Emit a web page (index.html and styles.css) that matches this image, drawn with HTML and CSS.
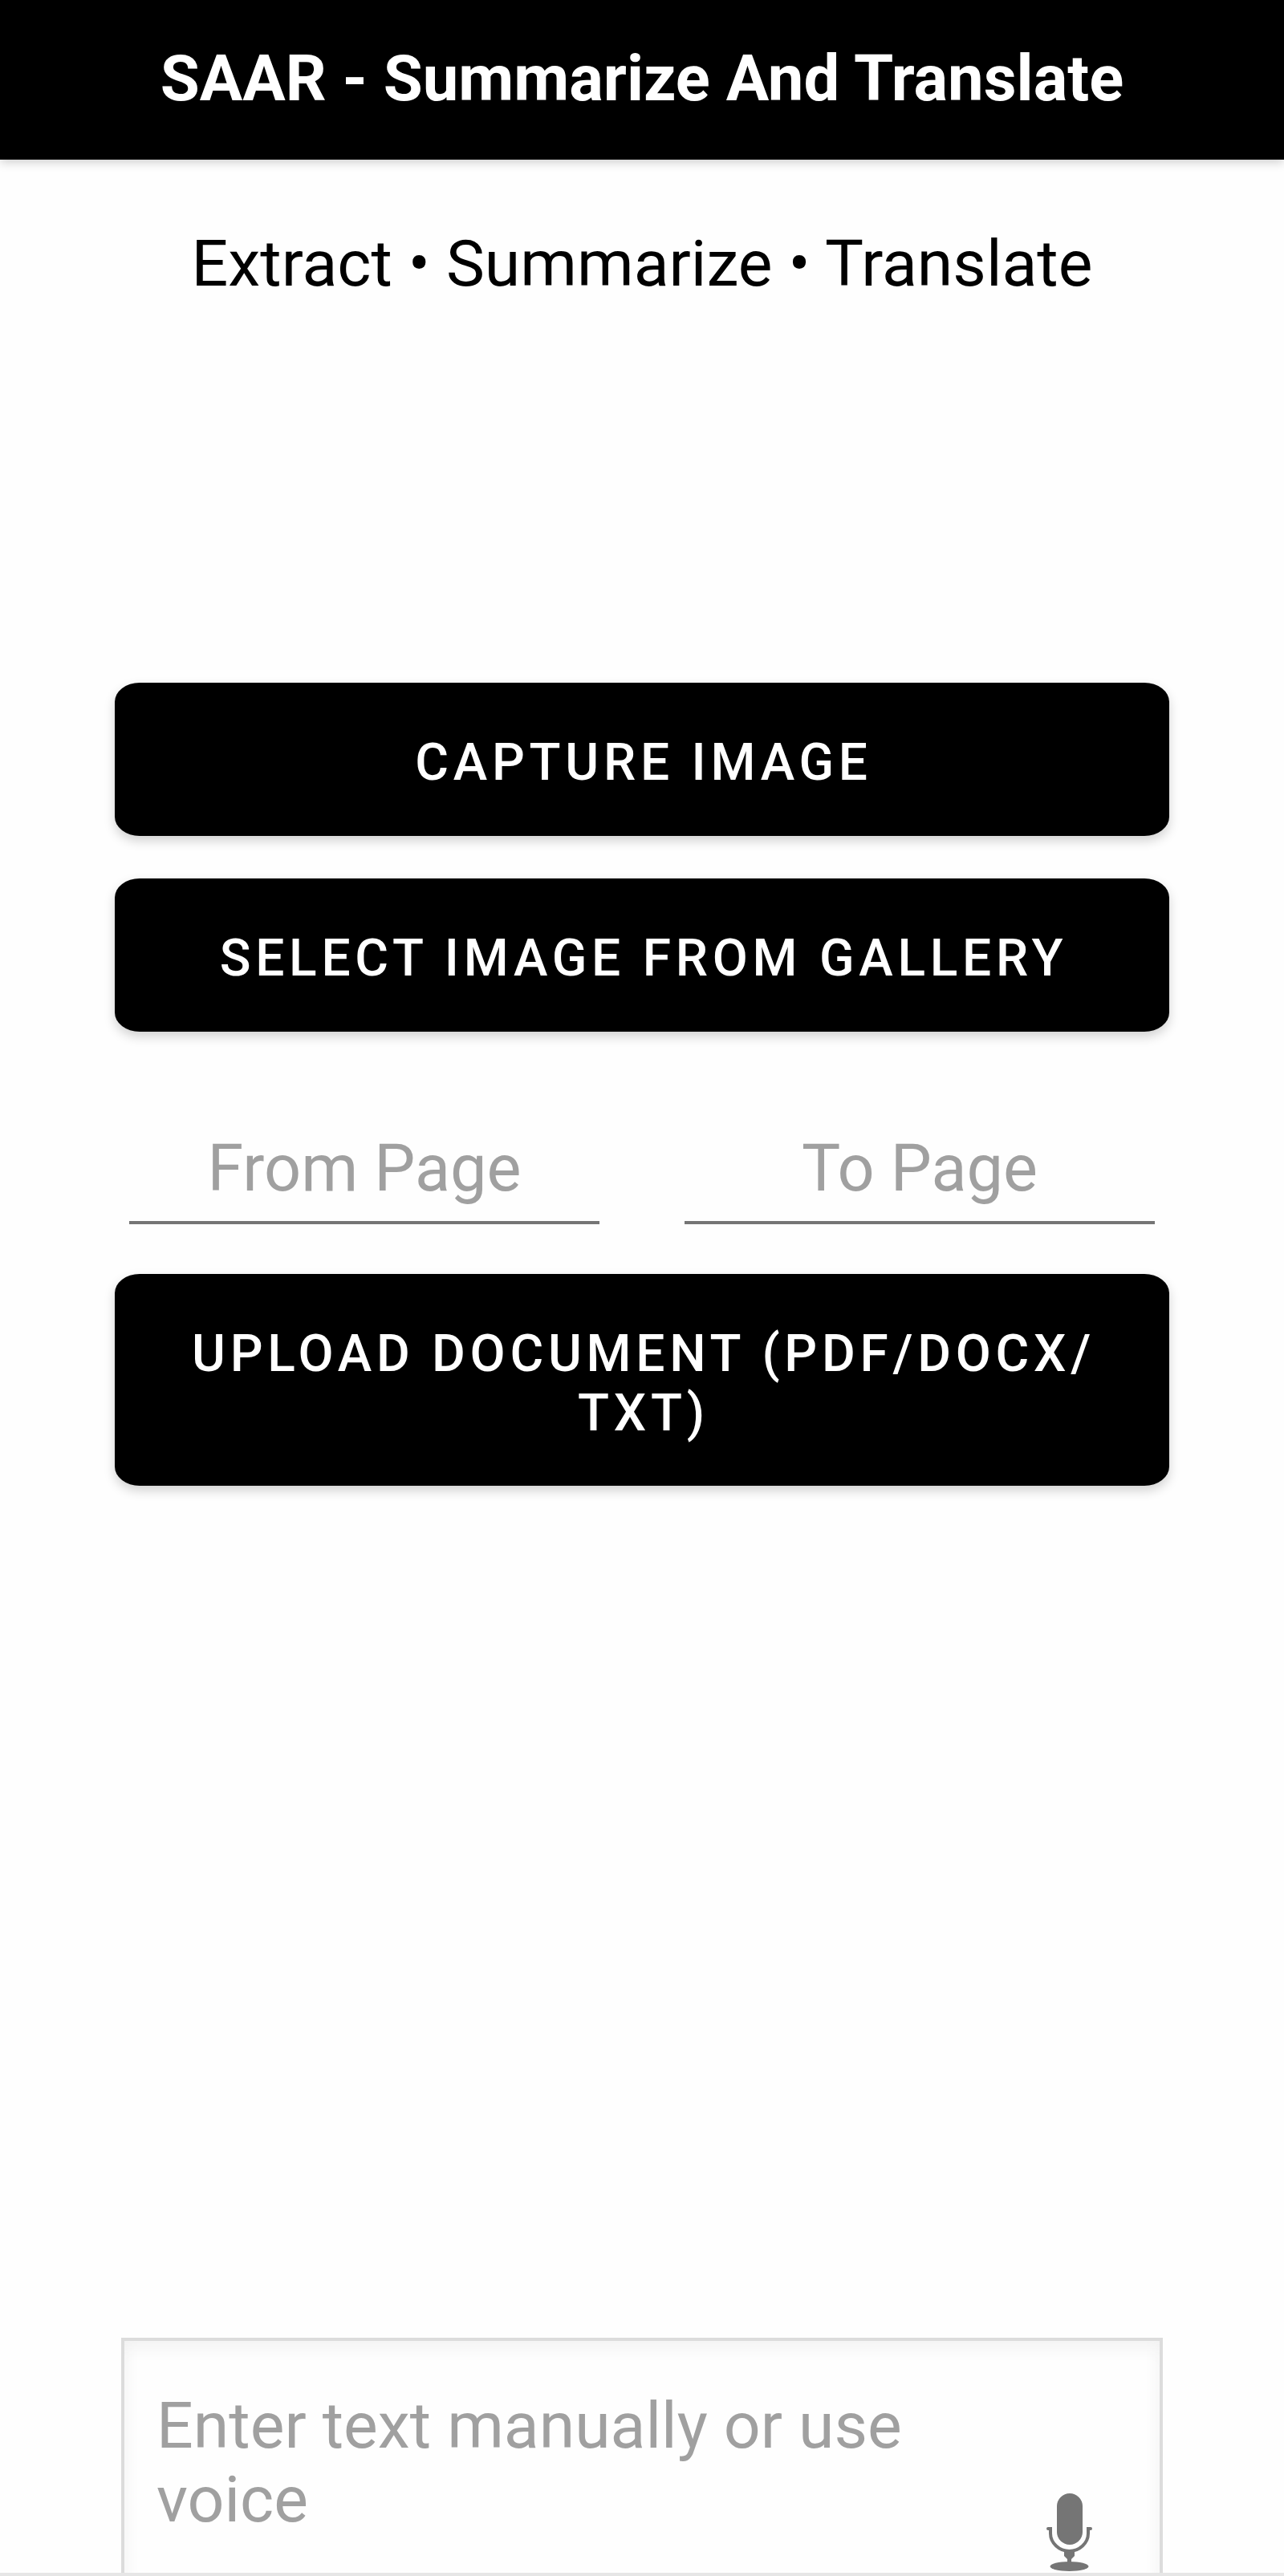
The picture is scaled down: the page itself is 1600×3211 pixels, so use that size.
FILE: index.html
```html
<!DOCTYPE html>
<html lang="en">
  <head>
    <meta charset="UTF-8" />
    <meta name="viewport" content="width=device-width, initial-scale=1.0" />
    <title>SAAR - Summarize And Translate</title>
    <link rel="stylesheet" href="styles.css">
  </head>
  <body>
    <header class="app-bar">SAAR - Summarize And Translate</header>
    <p class="tagline">Extract • Summarize • Translate</p>
    <div class="actions">
      <button class="action-btn">Capture Image</button>
      <button class="action-btn">Select Image From Gallery</button>
      <div class="page-range">
        <div class="page-field">From Page</div>
        <div class="page-field">To Page</div>
      </div>
      <button class="action-btn action-btn-tall">Upload Document (PDF/DOCX/<br>TXT)</button>
    </div>
    <div class="text-box">
      <div class="text-hint">Enter text manually or use<br>voice</div>
      <svg class="mic" viewBox="0 0 61 98" aria-hidden="true">
        <rect x="15" y="0" width="32" height="64" rx="16" fill="#757575" />
        <path d="M4 44 H7 V50 C7 62 18 72 30.500 72 C43 72 54 62 54 50 V44 H57" fill="none" stroke="#757575" stroke-width="4" stroke-linecap="round" />
        <path d="M24 73 H37 V78 L33 82 V86 H28 V82 L24 78 Z" fill="#757575" />
        <ellipse cx="30.500" cy="91" rx="24" ry="6" fill="#757575" />
      </svg>
    </div>
  </body>
</html>
```

FILE: styles.css
```css
* {
  box-sizing: border-box;
}
body {
  margin: 0;
  height: 3211px;
  overflow: hidden;
  display: flex;
  flex-direction: column;
  background-color: #fefefe;
  font-family: Roboto, "Liberation Sans", sans-serif;
  border-bottom: 4px solid #e6e6e6;
}
.app-bar {
  height: 199px;
  flex-shrink: 0;
  padding-bottom: 4px;
  display: flex;
  align-items: center;
  justify-content: center;
  background-color: #000;
  color: #fff;
  font-size: 79.600px;
  font-weight: 700;
  box-shadow: 0 3px 12px rgba(0, 0, 0, 0.2);
}
.tagline {
  margin: 62px 0 0;
  text-align: center;
  color: #000;
  font-size: 80.600px;
  line-height: 136px;
}
.actions {
  margin: 454px 143px 0;
  display: flex;
  flex-direction: column;
}
.action-btn {
  height: 191px;
  margin-bottom: 53px;
  border: none;
  border-radius: 31px / 24px;
  padding: 8px 0 0 4px;
  background-color: #000;
  color: #fff;
  font-family: inherit;
  font-size: 64px;
  font-weight: 500;
  letter-spacing: 5.750px;
  line-height: 74px;
  text-transform: uppercase;
  box-shadow: 0 6px 14px rgba(0, 0, 0, 0.18);
}
.action-btn-tall {
  height: 264px;
  margin-bottom: 0;
  padding-top: 10px;
}
.page-range {
  display: flex;
  justify-content: space-between;
  padding: 0 18px;
  margin-top: 41px;
  margin-bottom: 62px;
}
.page-field {
  width: 586px;
  height: 146px;
  border-bottom: 4px solid #757575;
  text-align: center;
  color: #a0a0a0;
  font-size: 81px;
  line-height: 154px;
}
.text-box {
  position: relative;
  flex: 1;
  margin: 1062px 151px 0;
  padding: 60px 40px 0;
  border: 4px solid #dcdcdc;
  border-bottom: none;
  box-shadow: inset 0 24px 24px -18px #f0f0f0, inset 20px 0 20px -18px #f4f4f4, inset -20px 0 20px -18px #f4f4f4;
}
.text-hint {
  color: #a0a0a0;
  font-size: 80.600px;
  line-height: 92px;
}
.mic {
  position: absolute;
  top: 190px;
  right: 82px;
  width: 61px;
  height: 98px;
}
```
